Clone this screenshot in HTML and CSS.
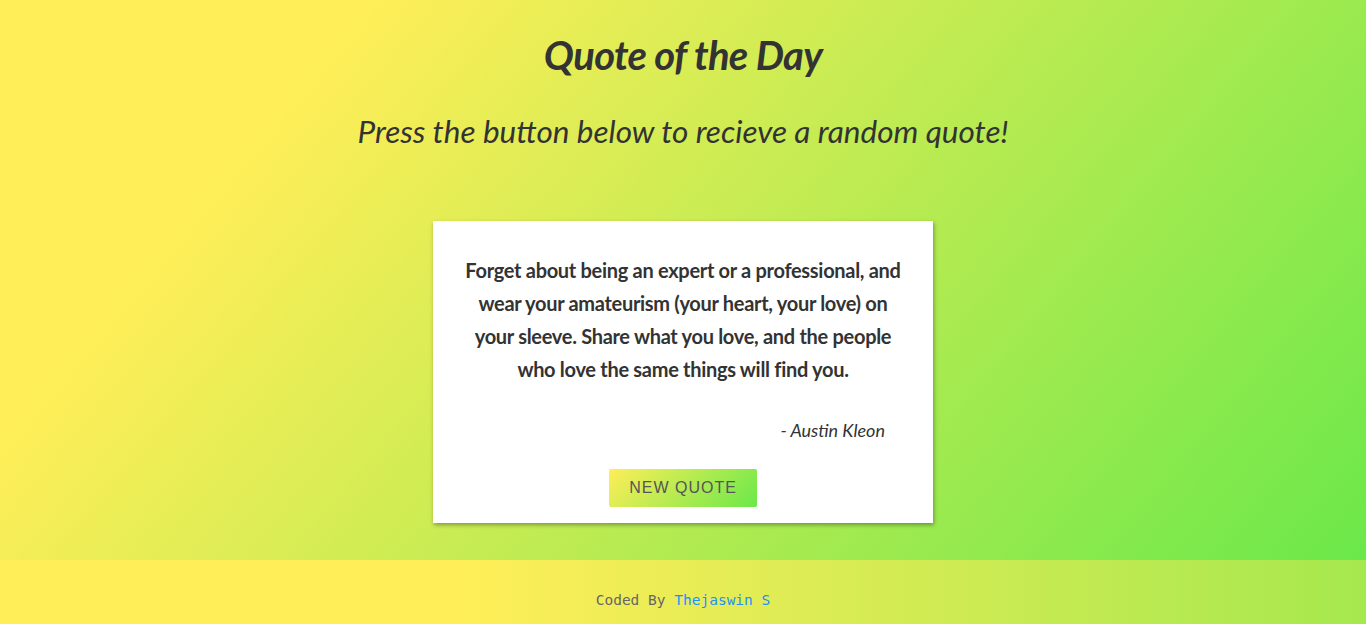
FILE: index.html
```html
<!DOCTYPE html>
<html lang="en">
<head>
<meta charset="utf-8">
<title>Quote of the Day</title>
<link rel="stylesheet" href="styles.css">
</head>
<body>
  <main class="main">
    <h1 class="title">Quote of the Day</h1>
    <h2 class="subtitle">Press the button below to recieve a random quote!</h2>
    <div class="card">
      <p class="quote">Forget about being an expert or a professional, and wear your amateurism (your heart, your love) on your sleeve. Share what you love, and the people who love the same things will find you.</p>
      <p class="author">- Austin Kleon</p>
      <button class="btn">NEW QUOTE</button>
    </div>
  </main>
  <footer class="footer">
    Coded By <a class="link" href="#">Thejaswin S</a>
  </footer>
</body>
</html>
```
FILE: styles.css
```css
html, body {
  margin: 0;
  padding: 0;
}
body {
  font-family: Lato, "Open Sans", sans-serif;
  color: #333;
}
.main {
  height: 560px;
  box-sizing: border-box;
  background: linear-gradient(130deg, #ffee58 20%, #6be84a 100%);
  display: flex;
  flex-direction: column;
  align-items: center;
  padding-top: 30px;
}
.title {
  margin: 0;
  font-size: 40px;
  line-height: 50px;
  font-style: italic;
  font-weight: 700;
  letter-spacing: -0.7px;
}
.subtitle {
  margin: 31px 0 0;
  font-size: 31.5px;
  line-height: 40px;
  font-style: italic;
  font-weight: 400;
}
.card {
  margin-top: 70px;
  width: 500px;
  box-sizing: border-box;
  background: #fff;
  padding: 33px 30px 16px;
  box-shadow: 1px 2px 4px rgba(0, 0, 0, 0.35);
  display: flex;
  flex-direction: column;
  align-items: center;
}
.quote {
  margin: 0;
  font-size: 20px;
  line-height: 33px;
  font-weight: 700;
  text-align: center;
  letter-spacing: -0.3px;
}
.author {
  margin: 31px 0 0;
  align-self: stretch;
  text-align: right;
  padding-right: 18px;
  font-size: 18px;
  line-height: 26px;
  font-style: italic;
}
.btn {
  margin-top: 26px;
  width: 148px;
  height: 38px;
  border: none;
  border-radius: 2px;
  background: linear-gradient(135deg, #ffee58, #6be84a);
  color: #555;
  font-family: "Liberation Sans", Arial, sans-serif;
  font-size: 16px;
  letter-spacing: 1px;
  cursor: pointer;
}
.footer {
  height: 64px;
  box-sizing: border-box;
  background: linear-gradient(to right, #ffee58 34%, #a5e84e 100%);
  text-align: center;
  padding-top: 31px;
  font-family: "DejaVu Sans Mono", "Liberation Mono", monospace;
  font-size: 14.5px;
  line-height: 18px;
  color: #666;
}
.link {
  color: #1e90ff;
  text-decoration: none;
}
```
